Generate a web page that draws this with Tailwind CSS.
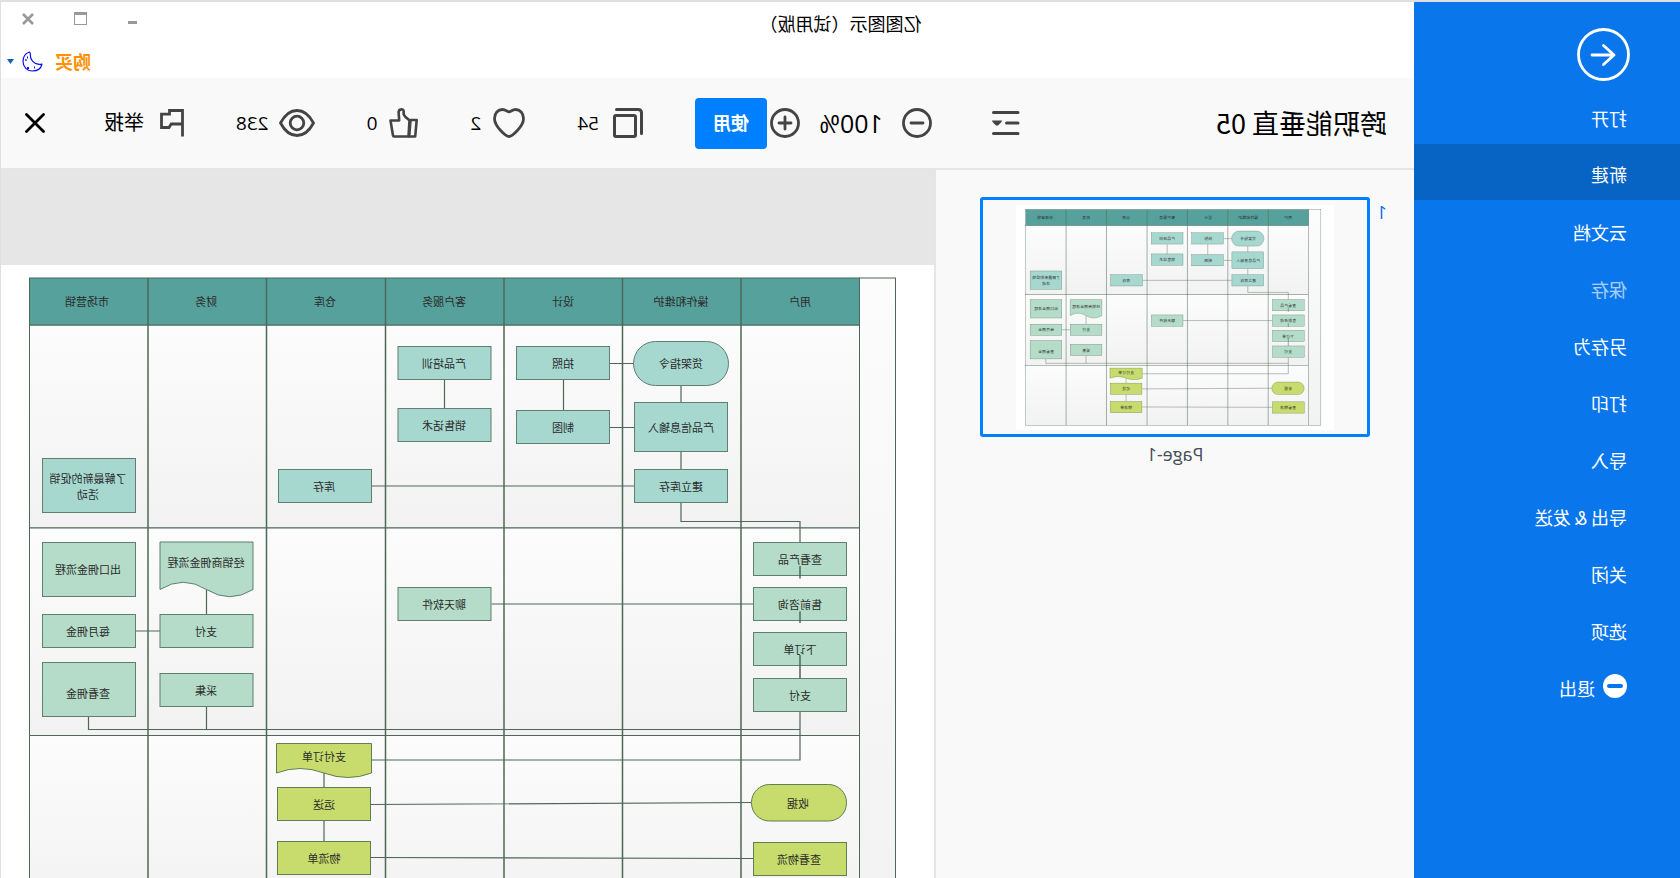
<!DOCTYPE html>
<html lang="zh-CN">
<head>
<meta charset="utf-8">
<title>亿图图示（试用版）</title>
<script src="https://cdn.jsdelivr.net/npm/@tailwindcss/browser@4"></script>
</head>
<body class="overflow-hidden bg-white">
<!-- The whole window is shown flipped left to right -->
<div class="-scale-x-100 h-screen flex flex-col overflow-hidden border-t-2 border-r border-[#dfdfdf] bg-white text-black font-['Noto_Sans_CJK_SC',sans-serif]">
<div class="flex flex-1 min-h-0">

  <nav class="w-[266px] shrink-0 bg-[#0976ec] text-white text-lg pt-[26px]" aria-label="文件">
    <button class="block ml-[50px] mb-1.5" aria-label="返回">
      <svg class="block" width="53" height="53" viewBox="0 0 53 53" fill="none" stroke="#fff" stroke-width="2.8" stroke-linecap="round" stroke-linejoin="round"><circle cx="26.500" cy="26.500" r="25"/><path d="M38 27H16M26.500 17.500L16 27l10.500 9.500"/></svg>
    </button>
    <ul>
      <li><a href="#" class="flex items-center h-[57px] pl-[53px] pt-1">打开</a></li>
      <li><a href="#" class="flex items-center h-14 mb-px pl-[53px] pt-1 bg-[#0764c4]">新建</a></li>
      <li><a href="#" class="flex items-center h-[57px] pl-[53px] pt-1">云文档</a></li>
      <li><a href="#" class="flex items-center h-[57px] pl-[53px] pt-1 text-white/65">保存</a></li>
      <li><a href="#" class="flex items-center h-[57px] pl-[53px] pt-1">另存为</a></li>
      <li><a href="#" class="flex items-center h-[57px] pl-[53px] pt-1">打印</a></li>
      <li><a href="#" class="flex items-center h-[57px] pl-[53px] pt-1">导入</a></li>
      <li><a href="#" class="flex items-center h-[57px] pl-[53px] pt-1">导出 &amp; 发送</a></li>
      <li><a href="#" class="flex items-center h-[57px] pl-[53px] pt-1">关闭</a></li>
      <li><a href="#" class="flex items-center h-[57px] pl-[53px] pt-1">选项</a></li>
      <li><a href="#" class="flex items-center gap-2 h-[57px] pl-[53px]"><svg width="24" height="24" viewBox="0 0 24 24"><circle cx="12" cy="12" r="12" fill="#fff"/><rect x="4" y="10" width="16" height="4" rx="2" fill="#0976ec"/></svg><span class="pt-1">退出</span></a></li>
    </ul>
  </nav>

  <div class="flex-1 min-w-0 flex flex-col">
    <header class="h-[76px] shrink-0">
      <div class="flex h-[42px]">
        <h1 class="flex-1 text-center text-lg leading-[42px]">亿图图示（试用版）</h1>
        <div class="w-[266px] flex justify-end gap-10 pr-[21px] pt-2.5 items-start">
          <button aria-label="最小化"><svg class="block" width="10" height="14" viewBox="0 0 10 14"><path d="M0 9h9v3H0z" fill="#999"/></svg></button>
          <button aria-label="最大化"><svg class="block" width="13" height="14" viewBox="0 0 13 14"><path d="M0 0h13v13H0zM1 3v9h11V3z" fill="#999" fill-rule="evenodd"/></svg></button>
          <button aria-label="关闭窗口"><svg class="block" width="12" height="14" viewBox="0 0 12 14" stroke="#999" stroke-width="2.600"><path d="M1 2l10 10M11 2L1 12"/></svg></button>
        </div>
      </div>
      <div class="flex items-center justify-end h-[34px] pr-1.5">
        <button class="text-lg leading-[34px] font-bold text-[#ff9100] mr-3">购买</button>
        <button aria-label="主题" class="flex items-center gap-2">
          <svg width="21" height="21" viewBox="0 0 21 21" fill="none" stroke="#0a0aff" stroke-width="1.200" stroke-linejoin="round"><path d="M13.500 1C18 2.500 20 6 20 10.500C20 16 15.800 20 10.500 20C6 20 2 17.500 1 13C1.500 13.300 3 13.600 5 13.200C9.500 12.400 12.600 8.500 12.600 5C12.600 3.500 12.400 1.500 13.500 1Z"/><path d="M15 6.500h1M16.500 9h1.200M8 16.500h1M14 17h2"  stroke-width="2"/></svg>
          <svg width="7" height="5" viewBox="0 0 7 5"><path d="M0 0h7L3.500 5z" fill="#1560b8"/></svg>
        </button>
      </div>
    </header>

    <div class="h-[92px] shrink-0 flex items-center bg-[#f9f9f9] border-b-2 border-[#e5e5e5] pl-[27px] pr-6">
      <div class="w-[395px] shrink-0 flex items-center justify-between">
        <h2 class="text-[27px] leading-8">跨职能垂直 05</h2>
        <button aria-label="列表"><svg class="block" width="28" height="24" viewBox="0 0 28 24" fill="none" stroke="#444" stroke-width="3" stroke-linecap="round"><path d="M2 1.500H26.500M2 22.500H26.500M2 12H13.500"/><path d="M18 9.500H28Q28 10.500 24.500 14Q23 15.500 21.500 14Q18 10.500 18 9.500Z" fill="#444" stroke="none"/></svg></button>
      </div>
      <div class="flex items-center shrink-0 ml-[60px] font-['Open_Sans','Noto_Sans_CJK_SC',sans-serif]">
        <button aria-label="缩小"><svg class="block" width="30" height="30" viewBox="0 0 30 30" fill="none" stroke="#444" stroke-width="2.800" stroke-linecap="round"><circle cx="15" cy="15" r="13.500"/><path d="M9 15h12"/></svg></button>
        <span class="w-[102px] text-center text-[25px] leading-8">100%</span>
        <button aria-label="放大"><svg class="block" width="30" height="30" viewBox="0 0 30 30" fill="none" stroke="#444" stroke-width="2.800" stroke-linecap="round"><circle cx="15" cy="15" r="13.500"/><path d="M9 15h12M15 9v12"/></svg></button>
        <button class="ml-[3px] w-[72px] h-[51px] rounded bg-[#007fff] text-white text-lg font-bold">使用</button>
      </div>
      <div class="flex items-center shrink-0 gap-[52px] ml-[52px] text-[19px] leading-8 font-['Open_Sans','Noto_Sans_CJK_SC',sans-serif]">
        <button class="flex items-center gap-3.5"><svg width="30" height="30" viewBox="0 0 30 30" fill="none" stroke="#444" stroke-width="3" stroke-linecap="round"><path d="M1.500 25.500V5Q1.500 1.500 5 1.500H26.500"/><rect x="7.500" y="7.500" width="21" height="21" rx="1.500"/></svg>54</button>
        <button class="flex items-center gap-3"><svg width="32" height="30" viewBox="0 0 32 30" fill="none" stroke="#444" stroke-width="2.800" stroke-linejoin="round"><path d="M16 28.500C13 28.500 1.500 18.500 1.500 10.500C1.500 5 5 1.500 9.500 1.500C12.500 1.500 14.500 3.800 16 3.800C17.500 3.800 19.500 1.500 22.500 1.500C27 1.500 30.500 5 30.500 10.500C30.500 18.500 19 28.500 16 28.500Z"/></svg>2</button>
        <button class="flex items-center gap-3"><svg width="29" height="30" viewBox="0 0 29 30" fill="none" stroke="#444" stroke-width="2.600" stroke-linejoin="round"><path d="M1.300 12H7.500L8.800 28.500H2.800Z"/><path d="M8 12.500C11 10.500 13 9.500 14.300 6.500V3.500C14.300 0.500 19.400 0.500 19.400 4.500L18.800 12.500H27.500L25 27.500Q24.800 28.500 24 28.500H9.500L8.500 12.500"/></svg>0</button>
        <button class="flex items-center gap-2.5"><svg width="36" height="28" viewBox="0 0 36 28" fill="none" stroke="#444" stroke-width="2.800" stroke-linejoin="round"><path d="M1.500 14C6 5.500 11 1.500 18 1.500S30 5.500 34.500 14C30 22.500 25 26.500 18 26.500S6 22.500 1.500 14Z"/><circle cx="18" cy="14" r="6.800"/></svg>238</button>
        <button class="flex items-center gap-4 text-xl leading-8"><svg width="24" height="28" viewBox="0 0 24 28" fill="none" stroke="#444" stroke-width="2.800"><path d="M1.500 27.500V1.500H14.500V5.200H22.500V18.500H15L12.800 15H1.500"/></svg>举报</button>
      </div>
      <button class="ml-auto" aria-label="关闭"><svg class="block" width="20" height="20" viewBox="0 0 20 20" stroke="#000" stroke-width="2.800" stroke-linecap="round"><path d="M1.500 1.500l17 17M18.500 1.500l-17 17"/></svg></button>
    </div>

    <div class="flex-1 min-h-0 flex">
      <aside class="w-[480px] shrink-0 bg-[#f9f9f9] border-r-2 border-[#e5e5e5] pt-[27px] pl-[27px] flex items-start gap-[7px] text-lg font-['Open_Sans',sans-serif]">
        <span class="w-2.5 text-[#0a6cf5] leading-[30px]">1</span>
        <button class="w-[390px]">
          <span class="flex items-center justify-center h-60 border-3 border-[#007fff] rounded-[3px]">
            <svg class="bg-white" width="318" height="225" viewBox="746 265 933 660" aria-hidden="true"><use href="#sheet"/></svg>
          </span>
          <span class="block text-center text-[#454c5a] leading-[34px]">Page-1</span>
        </button>
      </aside>

      <main class="flex-1 min-w-0 overflow-hidden bg-[#e6e6e6] pt-[95px]">
        <svg class="block w-full bg-white" viewBox="746 265 933 660" role="img" aria-label="跨职能垂直流程图">
          <defs>
            <linearGradient id="lane" x1="0" y1="0" x2="0" y2="1"><stop offset="0" stop-color="#fcfcfc"/><stop offset="1" stop-color="#f2f2f2"/></linearGradient>
          </defs>
          <g id="sheet">
            <g fill="url(#lane)" stroke="#4d6857" stroke-width="1">
              <rect x="784.500" y="278" width="36" height="633"/>
              <rect x="820.500" y="325" width="830" height="203"/>
              <rect x="820.500" y="528" width="830" height="207.500"/>
              <rect x="820.500" y="735.500" width="830" height="175.500"/>
              <rect x="820.500" y="278" width="830" height="47" fill="#56a19c"/>
            </g>
            <path d="M939 278V911M1057.500 278V911M1176 278V911M1294.500 278V911M1413.500 278V911M1532 278V911" fill="none" stroke="#4d6857" stroke-width="1.500"/>
            <g fill="none" stroke="#4d6857" stroke-width="1.200">
              <path d="M1046 363.500H1070M1046 427.500H1070M1116.500 380V410.500M1235.500 380V408.500M999 385V403M999 452V469.500M1046 486H1308M999 502.500V521.500H880V542M927 604H1188.500"/>
              <path d="M880 711.500V760H1308.500M880 729.500H1591.500V716.500M1473.500 706.500V729.500M1473.500 589V614.500M1520 631H1544M1356 773V787.500M1356 821V841M928.500 802.500L1309 804.500M927 858.500L1309 857.500"/>
            </g>
            <g fill="#a6d8d0" stroke="#5f7f6f" stroke-width="1">
              <rect x="951.500" y="341.500" width="95" height="44" rx="22"/>
              <rect x="952.500" y="402.500" width="93" height="49"/>
              <rect x="952.500" y="469.500" width="93" height="33"/>
              <rect x="1070.500" y="346.500" width="93" height="33"/>
              <rect x="1070.500" y="410.500" width="93" height="33"/>
              <rect x="1189" y="346.500" width="93" height="33"/>
              <rect x="1189" y="408.500" width="93" height="33"/>
              <rect x="1308.500" y="469.500" width="93" height="33"/>
              <rect x="1544.500" y="458.500" width="93" height="54"/>
            </g>
            <g fill="#b4dcc8" stroke="#5f7f6f" stroke-width="1">
              <rect x="833.500" y="542.500" width="93" height="33"/>
              <rect x="833.500" y="587.500" width="93" height="33"/>
              <rect x="833.500" y="632.500" width="93" height="33"/>
              <rect x="833.500" y="678.500" width="93" height="33"/>
              <rect x="1189" y="587.500" width="93" height="33"/>
              <path d="M1427 542H1520V589.500Q1497 575 1473.500 589.500T1427 589.500Z"/>
              <rect x="1427" y="614.500" width="93" height="33"/>
              <rect x="1427" y="673.500" width="93" height="33"/>
              <rect x="1544.500" y="542.500" width="93" height="54"/>
              <rect x="1544.500" y="614.500" width="93" height="33"/>
              <rect x="1544.500" y="662.500" width="93" height="54"/>
            </g>
            <g fill="#c7dc6c" stroke="#5f7f4f" stroke-width="1">
              <rect x="833.500" y="784.500" width="95" height="36.500" rx="18"/>
              <rect x="833.500" y="842.500" width="93" height="33"/>
              <path d="M1308.500 743.500H1403.500V773Q1380 764 1356 773T1308.500 773Z"/>
              <rect x="1309.500" y="787.500" width="93" height="33"/>
              <rect x="1309.500" y="841.500" width="93" height="33"/>
            </g>
            <path d="M880 566V578.500M880 611.500V623M880 655V678.500" fill="none" stroke="#4d6857" stroke-width="1.500"/>
            <g fill="#2b2b2b" font-size="11" text-anchor="middle">
              <text x="880" y="306">用户</text>
              <text x="999" y="306">操作和维护</text>
              <text x="1117" y="306">设计</text>
              <text x="1236" y="306">客户服务</text>
              <text x="1355" y="306">仓库</text>
              <text x="1474" y="306">财务</text>
              <text x="1593" y="306">市场营销</text>
              <text x="999" y="368">货架指令</text>
              <text x="999" y="432">产品信息输入</text>
              <text x="999" y="491">建立库存</text>
              <text x="1117" y="368">拍照</text>
              <text x="1117" y="432">制图</text>
              <text x="1236" y="368">产品培训</text>
              <text x="1236" y="430">销售话术</text>
              <text x="1356" y="491">库存</text>
              <text x="1592" y="483">了解最新的促销</text>
              <text x="1592" y="499">活动</text>
              <text x="880" y="564">查看产品</text>
              <text x="880" y="609">售前咨询</text>
              <text x="880" y="654">下订单</text>
              <text x="880" y="700">支付</text>
              <text x="1236" y="609">聊天软件</text>
              <text x="1474" y="567">经销商佣金流程</text>
              <text x="1474" y="636">支付</text>
              <text x="1474" y="695">采集</text>
              <text x="1592" y="574">出口佣金流程</text>
              <text x="1592" y="636">每月佣金</text>
              <text x="1592" y="698">查看佣金</text>
              <text x="1356" y="761">支付订单</text>
              <text x="1356" y="809">运送</text>
              <text x="1356" y="863">物流单</text>
              <text x="882" y="808">收据</text>
              <text x="881" y="864">查看物流</text>
            </g>
          </g>
        </svg>
      </main>
    </div>
  </div>
</div>
</div>
</body>
</html>
